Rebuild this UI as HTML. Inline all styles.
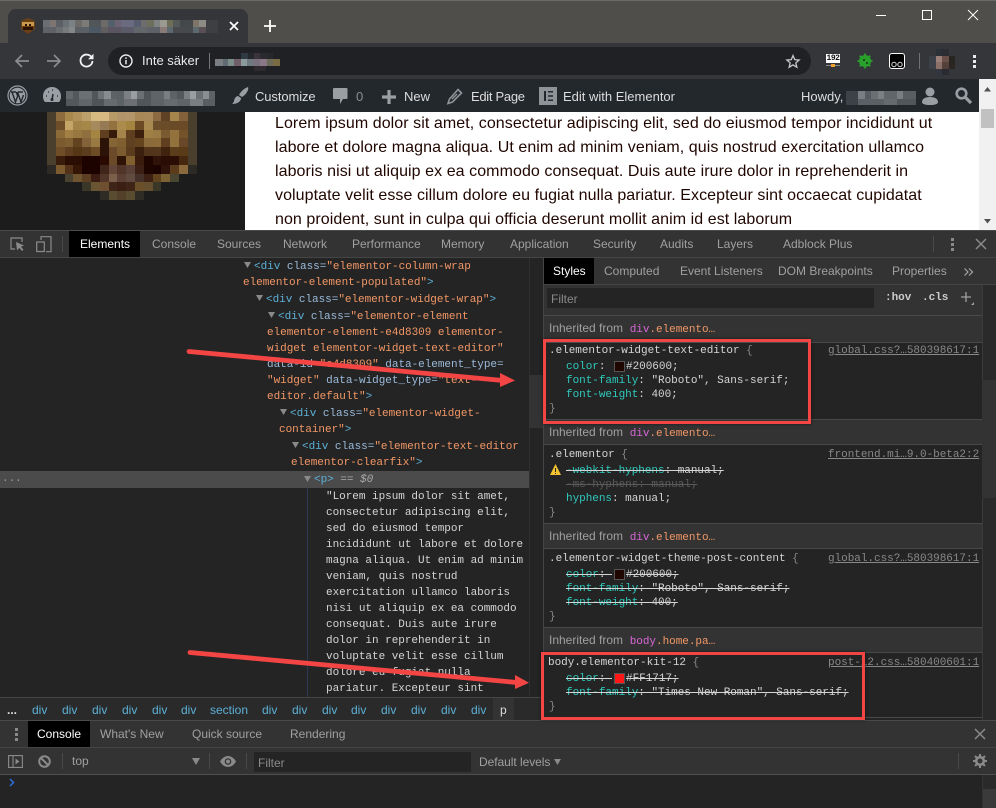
<!DOCTYPE html>
<html><head><meta charset="utf-8"><style>
html,body{margin:0;padding:0;background:#242424}
body{width:996px;height:808px;overflow:hidden;position:relative;font-family:"Liberation Sans",sans-serif}
.a{position:absolute}
.t{position:absolute;white-space:pre;font-size:12px;line-height:16px;color:#a0a0a0}
.w{position:absolute;white-space:pre;font-size:13px;line-height:18px;color:#ddd}
.m{position:absolute;white-space:pre;font:11px/16px "Liberation Mono",monospace;letter-spacing:-.03px;color:#d5d5d5}
.p{position:absolute;white-space:pre;font-size:16px;line-height:24px;color:#200600;left:275px;letter-spacing:.068px}
.c{color:#5db0d7}.n{color:#9bbbdc}.v{color:#f29766}.k{color:#2fc9bc}.g{color:#888}.s{text-decoration:line-through}.d{color:#d866d8}
.u{color:#888;text-decoration:underline}
.bl{color:#5db0d7}
svg{position:absolute;overflow:visible}
.sk{position:absolute;left:47px;top:112px;display:grid;grid-template-columns:repeat(17,8.8px);grid-auto-rows:8.8px}
.sk i{display:block}
.h{position:absolute;background:#333}
.sw{position:absolute;width:9px;height:9px;border:1px solid #555}
.q{display:inline-block;width:14px}
</style></head><body>

<!-- title bar -->
<div class="a" style="left:0;top:0;width:996px;height:43px;background:#4f4e4b"></div>
<div class="a" style="left:0;top:0;width:996px;height:1px;background:#6a6966"></div>
<div class="a" style="left:8px;top:9px;width:240px;height:34px;background:#35363a;border-radius:8px 8px 0 0"></div>
<div class="a" style="left:0;top:43px;width:996px;height:36px;background:#35363a"></div>
<svg style="left:20px;top:18px" width="16" height="16" viewBox="0 0 16 16"><path d="M1 3 8 0l7 3v8l-7 5-7-5z" fill="#6b3f16"/><path d="M2 4h12v4H2z" fill="#c89a50"/><path d="M3 9h10v3H3z" fill="#2a1206"/><path d="M5 6h2v2H5zM9 6h2v2H9z" fill="#2a1206"/></svg>
<div class="a" style="left:43px;top:20px;width:175px;height:6.5px;background:linear-gradient(90deg,#6b6e72 0 7px,#7d7572 0 13px,#5c5f63 0 20px,#6b7075 0 26px,#7b8287 0 32px,#6c6b68 0 39px,#7d7b76 0 46px,#50565a 0 58px,#6d6a68 0 65px,#53606b 0 72px,#6b6373 0 78px,#6a6a80 0 91px,#575c6e 0 98px,#6c6e6e 0 104px,#6e6e5c 0 111px,#7e8280 0 117px,#9a9a90 0 124px,#6d6d58 0 130px,#545a58 0 137px,#44484a 0 150px,#7e7468 0 156px,#8c8c84 0 163px,#3e3f42 0 175px)"></div>
<div class="a" style="left:43px;top:26.5px;width:175px;height:6.5px;background:linear-gradient(90deg,#5f6266 0 13px,#6b6e70 0 20px,#777b7c 0 26px,#85888a 0 32px,#5a6066 0 46px,#4c5863 0 58px,#615e60 0 65px,#5a5560 0 78px,#5a5a68 0 91px,#63676c 0 104px,#5e6268 0 117px,#8a7a78 0 124px,#5d6870 0 130px,#47494c 0 150px,#5c6a70 0 156px,#5a4f55 0 163px,#3e3f42 0 175px)"></div>
<svg style="left:228px;top:20px" width="12" height="12" viewBox="0 0 12 12"><path d="M2 2l8 8M10 2l-8 8" stroke="#fff" stroke-width="1.7"/></svg>
<svg style="left:263px;top:19px" width="14" height="14" viewBox="0 0 14 14"><path d="M7 1v12M1 7h12" stroke="#fff" stroke-width="1.8"/></svg>
<div class="a" style="left:876px;top:15px;width:10px;height:1px;background:#fff"></div>
<div class="a" style="left:922px;top:10px;width:8px;height:8px;border:1px solid #fff"></div>
<svg style="left:967px;top:9px" width="12" height="12" viewBox="0 0 12 12"><path d="M1 1l10 10M11 1 1 11" stroke="#fff" stroke-width="1"/></svg>

<!-- toolbar -->
<svg style="left:14px;top:53px" width="16" height="16" viewBox="0 0 16 16"><path d="M15 8H2M8 2 2 8l6 6" fill="none" stroke="#8a8b8d" stroke-width="1.7"/></svg>
<svg style="left:46px;top:53px" width="16" height="16" viewBox="0 0 16 16"><path d="M1 8h13M8 2l6 6-6 6" fill="none" stroke="#8a8b8d" stroke-width="1.7"/></svg>
<svg style="left:79px;top:53px" width="15" height="15" viewBox="0 0 15 15"><path d="M12.6 4.4A6 6 0 1 0 13.5 8" fill="none" stroke="#f1f3f4" stroke-width="1.8"/><path d="M14.5 .8v5.4H9z" fill="#f1f3f4"/></svg>
<div class="a" style="left:108px;top:47px;width:703px;height:28px;background:#202124;border-radius:14px"></div>
<svg style="left:119px;top:54px" width="14" height="14" viewBox="0 0 14 14"><circle cx="7" cy="7" r="6" fill="none" stroke="#e8eaed" stroke-width="1.4"/><path d="M7 6v4.2M7 3.4v1.5" stroke="#e8eaed" stroke-width="1.5"/></svg>
<div class="w" style="left:142px;top:52px;color:#e8eaed;font-size:13px">Inte säker</div>
<div class="a" style="left:209px;top:53px;width:1px;height:16px;background:#777"></div>
<div class="a" style="left:215px;top:59px;width:65px;height:7px;background:linear-gradient(90deg,#7a7d82 0 8px,#5f6a72 0 13px,#7c8e8a 0 19px,#705f68 0 26px,#8b9a9c 0 32px,#6f7880 0 39px,#7a6f7c 0 45px,#8b7886 0 52px,#6c6a58 0 58px,#7a6c42 0 65px)"></div>
<div class="a" style="left:241px;top:53px;width:32px;height:6px;background:linear-gradient(90deg,#2f3a42 0 7px,#26272c 0 13px,#3a333c 0 19px,#2a2a30 0 26px,#26282a 0 32px)"></div>
<div class="a" style="left:254px;top:66px;width:12px;height:5px;background:#2f2a30"></div>
<svg style="left:786px;top:54px" width="14" height="14" viewBox="0 0 16 15"><path d="M8 1.3 10 6l5 .4-3.800 3.300 1.200 4.900L8 12l-4.400 2.600 1.200-4.900L1 6.400 6 6z" fill="none" stroke="#c4c7c9" stroke-width="1.500"/></svg>
<!-- extensions -->
<div class="a" style="left:826px;top:54px;width:14px;height:9px;background:#fff;color:#111;font:bold 8px/9px 'Liberation Mono',monospace;text-align:center;letter-spacing:-.5px">192</div>
<div class="a" style="left:826px;top:65px;width:14px;height:1px;background:#888"></div>
<div class="a" style="left:831px;top:64px;width:4px;height:3px;background:#f0a030"></div>
<svg style="left:857px;top:53px" width="16" height="16" viewBox="0 0 16 16"><circle cx="8" cy="8" r="6" fill="#2aa02c"/><path d="M8 .5v15M.5 8h15M2.700 2.700l10.600 10.600M13.300 2.700 2.700 13.300" stroke="#2aa02c" stroke-width="1.800"/><path d="M6 6h2v2H6zM9 9h2v2H9z" fill="#1a4a1c"/></svg>
<div class="a" style="left:889px;top:53px;width:14px;height:14px;background:#000;border:1px solid #fff;border-radius:3px"></div>
<svg style="left:890px;top:61px" width="14" height="6" viewBox="0 0 14 6"><circle cx="4" cy="3.500" r="2.200" fill="none" stroke="#ddd"/><circle cx="10" cy="3.500" r="2.200" fill="none" stroke="#ddd"/></svg>
<div class="a" style="left:919px;top:53px;width:1px;height:16px;background:#707173"></div>
<div class="sk" style="left:929px;top:49px;grid-template-columns:repeat(4,6.500px);grid-auto-rows:6.500px"><i style="background:#35363a"></i><i style="background:#2c3138"></i><i style="background:#2b2d32"></i><i style="background:#35363a"></i><i style="background:#3c4048"></i><i style="background:#9a8078"></i><i style="background:#6a5048"></i><i style="background:#28241f"></i><i style="background:#3e4248"></i><i style="background:#8a7066"></i><i style="background:#54403a"></i><i style="background:#2a2622"></i><i style="background:#35363a"></i><i style="background:#33363e"></i><i style="background:#2a2b30"></i><i style="background:#35363a"></i></div>
<svg style="left:973px;top:55px" width="3" height="13" viewBox="0 0 3 13"><path d="M0 0h3v3H0zM0 5h3v3H0zM0 10h3v3H0z" fill="#e8eaed"/></svg>

<!-- wp bar -->
<div class="a" style="left:0;top:79px;width:979px;height:33px;background:#23282d"></div>
<svg style="left:7px;top:85px" width="21" height="21" viewBox="0 0 21 21"><circle cx="10.500" cy="10.500" r="9.500" fill="none" stroke="#9a9fa4" stroke-width="1.200"/><circle cx="10.500" cy="10.500" r="7.800" fill="#9a9fa4"/><path d="M4 7h5M11 7h5M5 7l3.500 10 2.200-6-1.500-4M10.500 7l3.500 10 2.500-7" fill="none" stroke="#23282d" stroke-width="1.400"/></svg>
<svg style="left:43px;top:87px" width="18" height="16" viewBox="0 0 18 16"><path d="M0 9a9 9 0 0 1 18 0c0 3-1 5-2 6H2C1 14 0 12 0 9z" fill="#9a9fa4"/><path d="M9 13l1-6" stroke="#23282d" stroke-width="1.500"/><circle cx="9" cy="12.500" r="1.500" fill="#23282d"/><path d="M3 9h1M5 5h1M9 3h1M14 9h1" stroke="#23282d" stroke-width="1.200"/></svg>
<div class="a" style="left:66px;top:91px;width:149px;height:7.500px;background:linear-gradient(90deg,#62686c 0 7px,#52585c 0 13px,#6a7074 0 26px,#50565a 0 32px,#6d7276 0 38px,#888c90 0 45px,#5c6266 0 51px,#5a6064 0 58px,#7c8084 0 65px,#9a9ea0 0 71px,#6c7074 0 78px,#4e5458 0 85px,#5e6468 0 98px,#7a7e82 0 104px,#5c6266 0 111px,#52585c 0 118px,#7a7e82 0 124px,#9a9ea0 0 130px,#6a7074 0 137px,#8a8e90 0 143px,#5c6266 0 149px)"></div>
<div class="a" style="left:66px;top:98.500px;width:149px;height:7.500px;background:linear-gradient(90deg,#52585c 0 13px,#60666a 0 26px,#4e5458 0 38px,#666b70 0 51px,#5c6266 0 58px,#6c7074 0 71px,#50565a 0 85px,#5c6266 0 98px,#666b70 0 111px,#5e6468 0 124px,#7a7e82 0 137px,#585e62 0 149px)"></div>
<svg style="left:230px;top:87px" width="20" height="18" viewBox="0 0 20 18"><path d="M18 0c1 2-1 7-6 10l-3-2C11 4 15 1 18 0zM8 9l3 2c0 3-3 6-9 6 2-1 2-4 3-6 1-1 2-2 3-2z" fill="#9a9fa4"/></svg>
<div class="w" style="left:255px;top:88px;letter-spacing:-.1px">Customize</div>
<svg style="left:333px;top:88px" width="15" height="17" viewBox="0 0 15 17"><path d="M1 0h12.500a1 1 0 0 1 1 1v9a1 1 0 0 1-1 1H10l-3 5v-5H1a1 1 0 0 1-1-1V1a1 1 0 0 1 1-1z" fill="#9a9fa4"/></svg>
<div class="w" style="left:356px;top:88px;color:#8a8f94">0</div>
<svg style="left:382px;top:90px" width="14" height="14" viewBox="0 0 14 14"><path d="M7 0v14M0 7h14" stroke="#9a9fa4" stroke-width="3.200"/></svg>
<div class="w" style="left:404px;top:88px">New</div>
<svg style="left:447px;top:88px" width="16" height="16" viewBox="0 0 16 16"><path d="M11 1.500l3.500 3.500-9 9L1 15.500 2.500 11z" fill="none" stroke="#8e9398" stroke-width="1.600"/><path d="M4.500 10.500l5-5 1 1-5 5z" fill="#8e9398"/></svg>
<div class="w" style="left:471px;top:88px;letter-spacing:-.3px">Edit Page</div>
<div class="a" style="left:539px;top:87px;width:18px;height:18px;background:#8e9398"></div>
<div class="a" style="left:544px;top:91px;width:2px;height:10px;background:#23282d"></div>
<svg style="left:548px;top:91px" width="6" height="10" viewBox="0 0 6 10"><path d="M0 .8h5M0 5h5M0 9.200h5" stroke="#23282d" stroke-width="1.500"/></svg>
<div class="w" style="left:563px;top:88px">Edit with Elementor</div>
<div class="w" style="left:801px;top:88px">Howdy,</div>
<div class="a" style="left:846px;top:91px;width:70px;height:7.500px;background:linear-gradient(90deg,#3c4248 0 12px,#7a7e82 0 19px,#555b60 0 25px,#6a6f74 0 32px,#7c8084 0 38px,#60666a 0 51px,#7a7e82 0 57px,#585e62 0 70px)"></div>
<div class="a" style="left:846px;top:98.500px;width:70px;height:6.500px;background:linear-gradient(90deg,#3c4248 0 12px,#5a6064 0 38px,#646a6e 0 51px,#50565a 0 70px)"></div>
<svg style="left:922px;top:87px" width="16" height="18" viewBox="0 0 16 18"><circle cx="8" cy="5" r="4.500" fill="#9a9fa4"/><path d="M0 15c0-3 3-5 8-5s8 2 8 5c0 2-3 3-8 3s-8-1-8-3z" fill="#9a9fa4"/></svg>
<svg style="left:955px;top:87px" width="17" height="17" viewBox="0 0 17 17"><circle cx="6.500" cy="6.500" r="4.800" fill="none" stroke="#9a9fa4" stroke-width="2.600"/><path d="M10 10l6 6" stroke="#9a9fa4" stroke-width="3.200"/></svg>

<!-- page -->
<div class="a" style="left:0;top:112px;width:245px;height:118px;background:#1c1c1c"></div>
<div class="a" style="left:245px;top:112px;width:734px;height:118px;background:#fff"></div>
<div class="a" style="left:979px;top:79px;width:17px;height:151px;background:#f1f1f1"></div>
<div class="a" style="left:981px;top:109px;width:13px;height:19px;background:#c1c1c1"></div>
<svg style="left:979px;top:79px" width="17" height="151" viewBox="0 0 17 151"><path d="M5 12.500 8.500 8l3.500 4.500z" fill="#505050"/><path d="M5 140 8.500 144.500 12 140z" fill="#505050"/></svg>
<div class="sk">
<i style="background:#4a3f2c"></i><i style="background:#8f6c3d"></i><i style="background:#a9884c"></i><i style="background:#b0925a"></i><i style="background:#bca06c"></i><i style="background:#d6b980"></i><i style="background:#d6b980"></i><i style="background:#b79a68"></i><i style="background:#b2946a"></i><i style="background:#b3966a"></i><i style="background:#a98858"></i><i style="background:#a9885a"></i><i style="background:#8c6b43"></i><i style="background:#5f4226"></i><i style="background:#a5854b"></i><i style="background:#83613a"></i><i style="background:#4a3f2c"></i>
<i style="background:#4a3f2c"></i><i style="background:#6d4e29"></i><i style="background:#c4a566"></i><i style="background:#a38348"></i><i style="background:#a58748"></i><i style="background:#a58a5e"></i><i style="background:#967a56"></i><i style="background:#94723f"></i><i style="background:#ab8c4c"></i><i style="background:#a4843f"></i><i style="background:#6b4a24"></i><i style="background:#a88a50"></i><i style="background:#6d4e2b"></i><i style="background:#6b4c28"></i><i style="background:#6a4b28"></i><i style="background:#6b4a28"></i><i style="background:#4a3f2c"></i>
<i style="background:#4a3f2c"></i><i style="background:#8d6b39"></i><i style="background:#a17f45"></i><i style="background:#987740"></i><i style="background:#8f6f3d"></i><i style="background:#a58541"></i><i style="background:#5f3f1f"></i><i style="background:#361a0a"></i><i style="background:#a4844a"></i><i style="background:#5f3f1f"></i><i style="background:#3c200d"></i><i style="background:#a07f44"></i><i style="background:#9b7b44"></i><i style="background:#7a5a30"></i><i style="background:#94723e"></i><i style="background:#74522a"></i><i style="background:#4a3f2c"></i>
<i style="background:#4a3f2c"></i><i style="background:#7c5a30"></i><i style="background:#7f5e32"></i><i style="background:#63431f"></i><i style="background:#83623a"></i><i style="background:#9a7a43"></i><i style="background:#2c1307"></i><i style="background:#856535"></i><i style="background:#7f5e30"></i><i style="background:#5f4020"></i><i style="background:#64441f"></i><i style="background:#8a693a"></i><i style="background:#8d6c3a"></i><i style="background:#5f3f20"></i><i style="background:#94723d"></i><i style="background:#69482a"></i><i style="background:#4a3f2c"></i>
<i style="background:#4a3f2c"></i><i style="background:#6f4d27"></i><i style="background:#5f3f1f"></i><i style="background:#553715"></i><i style="background:#5b3c1c"></i><i style="background:#6d4c25"></i><i style="background:#2c1307"></i><i style="background:#6a4a2a"></i><i style="background:#7c5b30"></i><i style="background:#5a3c1c"></i><i style="background:#3b1f0f"></i><i style="background:#52341a"></i><i style="background:#52351a"></i><i style="background:#40230f"></i><i style="background:#5b3c1b"></i><i style="background:#5a3b18"></i><i style="background:#4a3f2c"></i>
<i style="background:#4a3f2c"></i><i style="background:#3a1c0c"></i><i style="background:#2a0e04"></i><i style="background:#2a0e04"></i><i style="background:#1d0300"></i><i style="background:#1d0300"></i><i style="background:#2a0a02"></i><i style="background:#6b4a2a"></i><i style="background:#2e1306"></i><i style="background:#80602f"></i><i style="background:#3a1c0c"></i><i style="background:#1f0500"></i><i style="background:#2f1208"></i><i style="background:#2a0e05"></i><i style="background:#2a0e05"></i><i style="background:#45280f"></i><i style="background:#4a3f2c"></i>
<i style="background:#2d2a25"></i><i style="background:#7b5a30"></i><i style="background:#52331a"></i><i style="background:#341506"></i><i style="background:#1d0300"></i><i style="background:#1d0300"></i><i style="background:#40251a"></i><i style="background:#634638"></i><i style="background:#513529"></i><i style="background:#594038"></i><i style="background:#3c2014"></i><i style="background:#1f0500"></i><i style="background:#1a0300"></i><i style="background:#2f130a"></i><i style="background:#5a3b1c"></i><i style="background:#8a693c"></i><i style="background:#2d2a25"></i>
<i></i><i></i><i style="background:#4a4230"></i><i style="background:#6e5430"></i><i style="background:#5c3f22"></i><i style="background:#3a1c12"></i><i style="background:#503528"></i><i style="background:#7a5f4a"></i><i style="background:#5a4035"></i><i style="background:#614a40"></i><i style="background:#46302a"></i><i style="background:#3c2014"></i><i style="background:#60441e"></i><i style="background:#7d6234"></i><i style="background:#4a4530"></i><i></i><i></i>
<i></i><i></i><i></i><i></i><i style="background:#3a3628"></i><i style="background:#6a5532"></i><i style="background:#6e5030"></i><i style="background:#3f2418"></i><i style="background:#3a1f12"></i><i style="background:#3f2418"></i><i style="background:#6a4f2a"></i><i style="background:#64502f"></i><i style="background:#3a3628"></i><i></i><i></i><i></i><i></i>
<i></i><i></i><i></i><i></i><i></i><i></i><i style="background:#2f2c25"></i><i style="background:#5a4c30"></i><i style="background:#52402a"></i><i style="background:#5a4c30"></i><i style="background:#2f2c25"></i><i></i><i></i><i></i><i></i><i></i><i></i>
</div>
<div class="p" style="top:112px">Lorem ipsum dolor sit amet, consectetur adipiscing elit, sed do eiusmod tempor incididunt ut</div>
<div class="p" style="top:136px">labore et dolore magna aliqua. Ut enim ad minim veniam, quis nostrud exercitation ullamco</div>
<div class="p" style="top:160px">laboris nisi ut aliquip ex ea commodo consequat. Duis aute irure dolor in reprehenderit in</div>
<div class="p" style="top:184px">voluptate velit esse cillum dolore eu fugiat nulla pariatur. Excepteur sint occaecat cupidatat</div>
<div class="p" style="top:208px">non proident, sunt in culpa qui officia deserunt mollit anim id est laborum</div>

<!-- devtools top -->
<div class="a" style="left:0;top:230px;width:996px;height:1px;background:#4a4a4a"></div>
<div class="h" style="left:0;top:231px;width:996px;height:26px"></div>
<div class="a" style="left:0;top:257px;width:996px;height:1px;background:#454545"></div>
<div class="a" style="left:69px;top:231px;width:71px;height:26px;background:#000"></div>
<svg style="left:10px;top:237px" width="16" height="15" viewBox="0 0 16 15"><path d="M5 12H1V1h11v4" fill="none" stroke="#8a8a8a" stroke-width="1.200"/><path d="M6 5l8 3.500-3 1.200 2.500 3-1.500 1.300-2.500-3-2.500 2.300z" fill="#8a8a8a"/></svg>
<svg style="left:36px;top:236px" width="16" height="17" viewBox="0 0 16 17"><path d="M5 4V.7h10v15H10" fill="none" stroke="#8a8a8a" stroke-width="1.200"/><path d="M.7 6h7.600v9.500H.7z" fill="none" stroke="#8a8a8a" stroke-width="1.200"/></svg>
<div class="a" style="left:62px;top:236px;width:1px;height:16px;background:#494949"></div>
<div class="t" style="left:80px;top:236px;color:#fff">Elements</div>
<div class="t" style="left:152px;top:236px">Console</div>
<div class="t" style="left:217px;top:236px">Sources</div>
<div class="t" style="left:283px;top:236px">Network</div>
<div class="t" style="left:352px;top:236px">Performance</div>
<div class="t" style="left:441px;top:236px">Memory</div>
<div class="t" style="left:510px;top:236px">Application</div>
<div class="t" style="left:593px;top:236px">Security</div>
<div class="t" style="left:660px;top:236px">Audits</div>
<div class="t" style="left:717px;top:236px">Layers</div>
<div class="t" style="left:783px;top:236px">Adblock Plus</div>
<div class="a" style="left:933px;top:236px;width:1px;height:16px;background:#494949"></div>
<svg style="left:951px;top:238px" width="3" height="13" viewBox="0 0 3 13"><path d="M0 0h3v3H0zM0 5h3v3H0zM0 10h3v3H0z" fill="#8a8a8a"/></svg>
<svg style="left:976px;top:239px" width="10" height="10" viewBox="0 0 10 10"><path d="M0 0l10 10M10 0 0 10" stroke="#8a8a8a" stroke-width="1.500"/></svg>

<!-- elements panel -->
<div class="a" style="left:529px;top:258px;width:14px;height:439px;background:#242424;border-left:1px solid #2f2f2f;box-sizing:border-box"></div>
<div class="a" style="left:529px;top:375px;width:14px;height:53px;background:#333"></div>
<div class="a" style="left:543px;top:258px;width:1px;height:462px;background:#454545"></div>
<div class="a" style="left:0;top:471px;width:529px;height:17px;background:#4b4b4b"></div>
<div class="a" style="left:307px;top:488px;width:1px;height:209px;background:#2b3a55"></div>
<div class="m" style="left:254px;top:259px"><span class="c">&lt;div</span> <span class="n">class=</span><span class="v">"elementor-column-wrap</span></div>
<div class="m" style="left:243px;top:275px"><span class="v">elementor-element-populated"</span><span class="c">&gt;</span></div>
<div class="m" style="left:266px;top:292px"><span class="c">&lt;div</span> <span class="n">class=</span><span class="v">"elementor-widget-wrap"</span><span class="c">&gt;</span></div>
<div class="m" style="left:278px;top:309px"><span class="c">&lt;div</span> <span class="n">class=</span><span class="v">"elementor-element</span></div>
<div class="m" style="left:267px;top:325px"><span class="v">elementor-element-e4d8309 elementor-</span></div>
<div class="m" style="left:267px;top:341px"><span class="v">widget elementor-widget-text-editor"</span></div>
<div class="m" style="left:267px;top:357px"><span class="n">data-id=</span><span class="v">"e4d8309"</span> <span class="n">data-element_type=</span></div>
<div class="m" style="left:267px;top:373px"><span class="v">"widget"</span> <span class="n">data-widget_type=</span><span class="v">"text-</span></div>
<div class="m" style="left:267px;top:389px"><span class="v">editor.default"</span><span class="c">&gt;</span></div>
<div class="m" style="left:290px;top:406px"><span class="c">&lt;div</span> <span class="n">class=</span><span class="v">"elementor-widget-</span></div>
<div class="m" style="left:279px;top:422px"><span class="v">container"</span><span class="c">&gt;</span></div>
<div class="m" style="left:302px;top:439px"><span class="c">&lt;div</span> <span class="n">class=</span><span class="v">"elementor-text-editor</span></div>
<div class="m" style="left:291px;top:455px"><span class="v">elementor-clearfix"</span><span class="c">&gt;</span></div>
<div class="m" style="left:314px;top:472px"><span class="c">&lt;p&gt;</span> <span style="color:#aaa">== <i>$0</i></span></div>
<div class="m" style="left:2px;top:471px;color:#9a9a9a">...</div>
<svg style="left:244px;top:262px" width="9" height="200" viewBox="0 0 9 200"><path d="M0 0h7l-3.500 6zM12 33h7l-3.500 6zM24 50h7l-3.500 6zM36 147h7l-3.500 6zM48 180h7l-3.500 6z" fill="#8a8a8a"/></svg>
<svg style="left:304px;top:476px" width="7" height="6" viewBox="0 0 7 6"><path d="M0 0h7L3.500 6z" fill="#8a8a8a"/></svg>
<div class="m" style="left:326px;top:489px">"Lorem ipsum dolor sit amet,</div>
<div class="m" style="left:326px;top:505px">consectetur adipiscing elit,</div>
<div class="m" style="left:326px;top:521px">sed do eiusmod tempor</div>
<div class="m" style="left:326px;top:537px">incididunt ut labore et dolore</div>
<div class="m" style="left:326px;top:553px">magna aliqua. Ut enim ad minim</div>
<div class="m" style="left:326px;top:569px">veniam, quis nostrud</div>
<div class="m" style="left:326px;top:585px">exercitation ullamco laboris</div>
<div class="m" style="left:326px;top:601px">nisi ut aliquip ex ea commodo</div>
<div class="m" style="left:326px;top:617px">consequat. Duis aute irure</div>
<div class="m" style="left:326px;top:633px">dolor in reprehenderit in</div>
<div class="m" style="left:326px;top:649px">voluptate velit esse cillum</div>
<div class="m" style="left:326px;top:665px">dolore eu fugiat nulla</div>
<div class="m" style="left:326px;top:681px">pariatur. Excepteur sint</div>

<!-- breadcrumbs -->
<div class="h" style="left:0;top:697px;width:543px;height:24px;background:#2a2a2a;border-top:1px solid #454545;box-sizing:border-box"></div>
<div class="a" style="left:493px;top:698px;width:21px;height:22px;background:#333"></div>
<div class="t" style="left:7px;top:702px;color:#ddd;font-weight:bold">...</div>
<div class="t bl" style="left:32px;top:702px">div</div><div class="t bl" style="left:62px;top:702px">div</div><div class="t bl" style="left:92px;top:702px">div</div><div class="t bl" style="left:122px;top:702px">div</div><div class="t bl" style="left:152px;top:702px">div</div><div class="t bl" style="left:181px;top:702px">div</div>
<div class="t bl" style="left:210px;top:702px">section</div>
<div class="t bl" style="left:262px;top:702px">div</div><div class="t bl" style="left:292px;top:702px">div</div><div class="t bl" style="left:322px;top:702px">div</div><div class="t bl" style="left:351px;top:702px">div</div><div class="t bl" style="left:381px;top:702px">div</div><div class="t bl" style="left:411px;top:702px">div</div><div class="t bl" style="left:441px;top:702px">div</div><div class="t bl" style="left:471px;top:702px">div</div>
<div class="t" style="left:500px;top:702px;color:#ddd">p</div>

<!-- styles panel -->
<div class="h" style="left:544px;top:258px;width:452px;height:26px"></div>
<div class="a" style="left:544px;top:258px;width:50px;height:26px;background:#000"></div>
<div class="t" style="left:553px;top:263px;color:#fff">Styles</div>
<div class="t" style="left:604px;top:263px">Computed</div>
<div class="t" style="left:680px;top:263px">Event Listeners</div>
<div class="t" style="left:778px;top:263px">DOM Breakpoints</div>
<div class="t" style="left:892px;top:263px">Properties</div>
<svg style="left:964px;top:268px" width="9" height="8" viewBox="0 0 9 8"><path d="M.5.500 4 4 .5 7.500M5 .500 8.500 4 5 7.500" fill="none" stroke="#a8a8a8" stroke-width="1.200"/></svg>
<div class="a" style="left:544px;top:284px;width:452px;height:1px;background:#454545"></div>
<div class="h" style="left:544px;top:285px;width:438px;height:30px"></div>
<div class="a" style="left:547px;top:288px;width:327px;height:20px;background:#242424"></div>
<div class="t" style="left:551px;top:291px;color:#8a8a8a">Filter</div>
<div class="m" style="left:885px;top:290px;color:#ccc;font-weight:bold">:hov</div>
<div class="m" style="left:922px;top:290px;color:#ccc;font-weight:bold">.cls</div>
<svg style="left:961px;top:292px" width="14" height="14" viewBox="0 0 14 14"><path d="M5 0v10M0 5h10" stroke="#a0a0a0" stroke-width="1.300"/><path d="M13 10v3h-3z" fill="#a0a0a0"/></svg>
<div class="a" style="left:544px;top:315px;width:438px;height:1px;background:#494949"></div>

<div class="h" style="left:544px;top:316px;width:438px;height:26px"></div>
<div class="a" style="left:544px;top:342px;width:438px;height:1px;background:#494949"></div>
<div class="t" style="left:549px;top:320px">Inherited from  <span class="m" style="position:static"><span class="d">div</span><span class="v">.elemento…</span></span></div>
<div class="m" style="left:549px;top:343px">.elementor-widget-text-editor <span class="g">{</span></div>
<div class="m u" style="left:828px;top:343px">global.css?…580398617:1</div>
<div class="m" style="left:566px;top:359px"><span class="k">color</span>: <span class="q"></span>#200600;</div>
<div class="sw" style="left:614px;top:361px;background:#200600"></div>
<div class="m" style="left:566px;top:373px"><span class="k">font-family</span>: "Roboto", Sans-serif;</div>
<div class="m" style="left:566px;top:387px"><span class="k">font-weight</span>: 400;</div>
<div class="m g" style="left:549px;top:401px">}</div>
<div class="a" style="left:544px;top:419px;width:438px;height:1px;background:#494949"></div>

<div class="h" style="left:544px;top:420px;width:438px;height:24px"></div>
<div class="a" style="left:544px;top:444px;width:438px;height:1px;background:#494949"></div>
<div class="t" style="left:549px;top:424px">Inherited from  <span class="m" style="position:static"><span class="d">div</span><span class="v">.elemento…</span></span></div>
<div class="m" style="left:549px;top:447px">.elementor <span class="g">{</span></div>
<div class="m u" style="left:828px;top:447px">frontend.mi…9.0-beta2:2</div>
<svg style="left:550px;top:464px" width="11" height="11" viewBox="0 0 11 11"><path d="M5.500 0 11 11H0z" fill="#f4c430"/><path d="M5 4h1v4H5zM5 9h1v1H5z" fill="#222"/></svg>
<div class="m s" style="left:566px;top:463px"><span class="k">-webkit-hyphens</span>: manual;</div>
<div class="m s" style="left:566px;top:477px;color:#5a5a5a">-ms-hyphens: manual;</div>
<div class="m" style="left:566px;top:491px"><span class="k">hyphens</span>: manual;</div>
<div class="m g" style="left:549px;top:505px">}</div>
<div class="a" style="left:544px;top:523px;width:438px;height:1px;background:#494949"></div>

<div class="h" style="left:544px;top:524px;width:438px;height:24px"></div>
<div class="a" style="left:544px;top:548px;width:438px;height:1px;background:#494949"></div>
<div class="t" style="left:549px;top:528px">Inherited from  <span class="m" style="position:static"><span class="d">div</span><span class="v">.elemento…</span></span></div>
<div class="m" style="left:549px;top:551px">.elementor-widget-theme-post-content <span class="g">{</span></div>
<div class="m u" style="left:828px;top:551px">global.css?…580398617:1</div>
<div class="m s" style="left:566px;top:567px"><span class="k">color</span>: <span class="q"></span>#200600;</div>
<div class="sw" style="left:614px;top:569px;background:#200600"></div>
<div class="m s" style="left:566px;top:581px"><span class="k">font-family</span>: "Roboto", Sans-serif;</div>
<div class="m s" style="left:566px;top:595px"><span class="k">font-weight</span>: 400;</div>
<div class="m g" style="left:549px;top:609px">}</div>
<div class="a" style="left:544px;top:627px;width:438px;height:1px;background:#494949"></div>

<div class="h" style="left:544px;top:628px;width:438px;height:24px"></div>
<div class="a" style="left:544px;top:652px;width:438px;height:1px;background:#494949"></div>
<div class="t" style="left:549px;top:632px">Inherited from  <span class="m" style="position:static"><span class="d">body</span><span class="v">.home.pa…</span></span></div>
<div class="m" style="left:548px;top:655px">body.elementor-kit-12 <span class="g">{</span></div>
<div class="m u" style="left:828px;top:655px">post-12.css…580400601:1</div>
<div class="m s" style="left:566px;top:671px"><span class="k">color</span>: <span class="q"></span>#FF1717;</div>
<div class="sw" style="left:614px;top:673px;background:#ff1717"></div>
<div class="m s" style="left:566px;top:685px"><span class="k">font-family</span>: "Times New Roman", Sans-serif;</div>
<div class="m g" style="left:549px;top:699px">}</div>
<div class="a" style="left:544px;top:717px;width:438px;height:1px;background:#494949"></div>

<div class="a" style="left:982px;top:285px;width:14px;height:435px;background:#2a2a2a;border-left:1px solid #3a3a3a;box-sizing:border-box"></div>
<div class="a" style="left:982px;top:380px;width:14px;height:118px;background:#333"></div>

<!-- drawer -->
<div class="a" style="left:0;top:720px;width:996px;height:1px;background:#4a4a4a"></div>
<div class="h" style="left:0;top:721px;width:996px;height:53px"></div>
<div class="a" style="left:0;top:747px;width:996px;height:1px;background:#454545"></div>
<div class="a" style="left:0;top:774px;width:996px;height:1px;background:#505050"></div>
<div class="a" style="left:28px;top:721px;width:62px;height:26px;background:#000"></div>
<svg style="left:15px;top:728px" width="3" height="13" viewBox="0 0 3 13"><path d="M0 0h3v3H0zM0 5h3v3H0zM0 10h3v3H0z" fill="#8a8a8a"/></svg>
<div class="t" style="left:37px;top:726px;color:#fff">Console</div>
<div class="t" style="left:100px;top:726px">What's New</div>
<div class="t" style="left:192px;top:726px">Quick source</div>
<div class="t" style="left:290px;top:726px">Rendering</div>
<svg style="left:975px;top:729px" width="10" height="10" viewBox="0 0 10 10"><path d="M0 0l10 10M10 0 0 10" stroke="#8a8a8a" stroke-width="1.500"/></svg>
<svg style="left:8px;top:755px" width="15" height="13" viewBox="0 0 15 13"><path d="M.6.600h13.800v11.800H.6zM5 .6v11.800" fill="none" stroke="#8a8a8a" stroke-width="1.100"/><path d="M7.500 3.500 11.500 6.500 7.500 9.500z" fill="#8a8a8a"/></svg>
<svg style="left:38px;top:755px" width="13" height="13" viewBox="0 0 13 13"><circle cx="6.500" cy="6.500" r="5.300" fill="none" stroke="#8a8a8a" stroke-width="2"/><path d="M2.500 2.500l8 8" stroke="#8a8a8a" stroke-width="2"/></svg>
<div class="a" style="left:62px;top:753px;width:1px;height:16px;background:#494949"></div>
<div class="t" style="left:72px;top:753px">top</div>
<svg style="left:192px;top:758px" width="8" height="7" viewBox="0 0 8 7"><path d="M0 0h8L4 7z" fill="#8a8a8a"/></svg>
<div class="a" style="left:209px;top:753px;width:1px;height:16px;background:#494949"></div>
<svg style="left:220px;top:756px" width="16" height="11" viewBox="0 0 16 11"><path d="M0 5.500C2 2 5 0 8 0s6 2 8 5.500C14 9 11 11 8 11S2 9 0 5.500z" fill="#8a8a8a"/><circle cx="8" cy="5.500" r="3.300" fill="#333"/><circle cx="8" cy="5.500" r="2" fill="#8a8a8a"/></svg>
<div class="a" style="left:246px;top:753px;width:1px;height:16px;background:#494949"></div>
<div class="a" style="left:254px;top:752px;width:217px;height:20px;background:#242424"></div>
<div class="t" style="left:258px;top:755px;color:#8a8a8a">Filter</div>
<div class="t" style="left:479px;top:754px;letter-spacing:-.05px">Default levels</div>
<svg style="left:554px;top:759px" width="7" height="6" viewBox="0 0 8 7"><path d="M0 0h8L4 7z" fill="#8a8a8a"/></svg>
<div class="a" style="left:958px;top:753px;width:1px;height:16px;background:#494949"></div>
<svg style="left:973px;top:754px" width="14" height="14" viewBox="0 0 14 14"><circle cx="7" cy="7" r="3.800" fill="none" stroke="#8a8a8a" stroke-width="2.600"/><path d="M7 0v14M0 7h14M2 2l10 10M12 2 2 12" stroke="#8a8a8a" stroke-width="2" stroke-dasharray="2.600 8.800 2.600"/></svg>
<svg style="left:9px;top:778px" width="6" height="9" viewBox="0 0 6 9"><path d="M1 1l3.500 3.500L1 8" fill="none" stroke="#2a6fe0" stroke-width="1.500"/></svg>
<div class="a" style="left:982px;top:775px;width:14px;height:33px;background:#2a2a2a;border-left:1px solid #333;box-sizing:border-box"></div>
<div class="a" style="left:983px;top:789px;width:13px;height:19px;background:#3a3a3a"></div>

<!-- annotations -->
<div class="a" style="left:543px;top:338.500px;width:262px;height:79px;border:3px solid #f44545;box-shadow:0 0 3px rgba(0,0,0,.6)"></div>
<div class="a" style="left:541px;top:652px;width:318px;height:62px;border:3px solid #f44545;box-shadow:0 0 3px rgba(0,0,0,.6)"></div>
<svg style="left:0;top:0" width="996" height="808" viewBox="0 0 996 808"><path d="M189 351.500 503 380.500" stroke="#f44545" stroke-width="4.800" stroke-linecap="round"/><path d="M515 380.500 500 373v14z" fill="#f44545"/><path d="M190 652.500 517 682.500" stroke="#f44545" stroke-width="4.800" stroke-linecap="round"/><path d="M529 682.700 515 675v14z" fill="#f44545"/></svg>
</body></html>
